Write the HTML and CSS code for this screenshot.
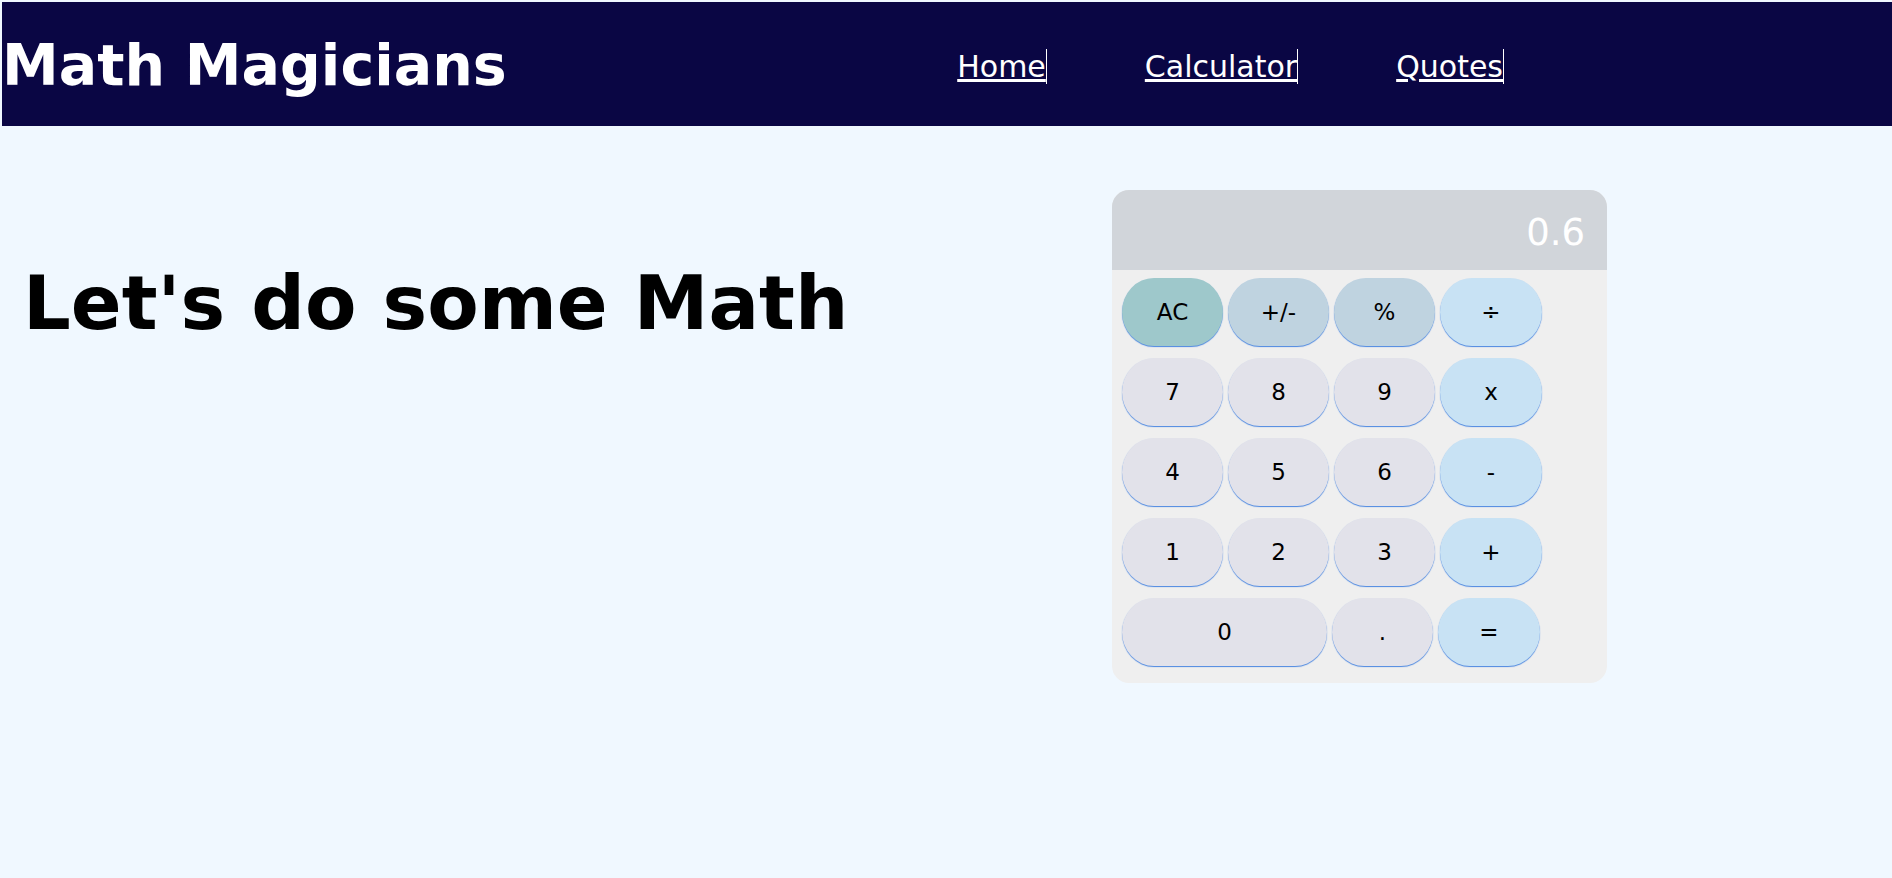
FILE: index.html
```html
<!DOCTYPE html>
<html lang="en">
<head>
<meta charset="utf-8">
<title>Math Magicians</title>
<link rel="stylesheet" href="styles.css">
</head>
<body>
<header class="header">
  <h1 class="brand">Math Magicians</h1>
  <nav class="nav">
    <ul class="nav-list">
      <li><a class="nav-link" href="#">Home</a></li>
      <li><a class="nav-link" href="#">Calculator</a></li>
      <li><a class="nav-link" href="#">Quotes</a></li>
    </ul>
  </nav>
</header>
<main class="main">
  <h2 class="headline">Let's do some Math</h2>
  <div class="calculator">
    <div class="display">0.6</div>
    <div class="keypad">
      <div class="row">
        <button class="key key-ac">AC</button>
        <button class="key key-fn">+/-</button>
        <button class="key key-fn">%</button>
        <button class="key key-op">÷</button>
      </div>
      <div class="row">
        <button class="key">7</button>
        <button class="key">8</button>
        <button class="key">9</button>
        <button class="key key-op">x</button>
      </div>
      <div class="row">
        <button class="key">4</button>
        <button class="key">5</button>
        <button class="key">6</button>
        <button class="key key-op">-</button>
      </div>
      <div class="row">
        <button class="key">1</button>
        <button class="key">2</button>
        <button class="key">3</button>
        <button class="key key-op">+</button>
      </div>
      <div class="row">
        <button class="key key-zero">0</button>
        <button class="key">.</button>
        <button class="key key-op">=</button>
      </div>
    </div>
  </div>
</main>
</body>
</html>
```

FILE: styles.css
```css
* {
  box-sizing: border-box;
}

html, body {
  margin: 0;
  padding: 0;
}

body {
  background: #f0f8ff;
  font-family: "DejaVu Sans", Verdana, sans-serif;
  color: #000;
}

.header {
  margin: 2px 0 0 2px;
  height: 124px;
  background: #0a0644;
  display: flex;
  align-items: center;
  justify-content: space-between;
}

.brand {
  margin: 0;
  color: #fff;
  font-size: 57px;
  font-weight: bold;
  line-height: 1;
  padding-top: 2px;
}

.nav {
  padding-right: 388px;
  padding-top: 4px;
}

.nav-list {
  list-style: none;
  margin: 0;
  padding: 0;
  display: flex;
  gap: 98px;
}

.nav-link {
  color: #fff;
  font-size: 30px;
  text-decoration: underline;
  border-right: 1px solid #fff;
}

.main {
  display: flex;
  justify-content: space-between;
  align-items: flex-start;
  padding: 64px 285px 0 23px;
}

.headline {
  margin: 70px 0 0 0;
  font-size: 75px;
  font-weight: bold;
  line-height: 87px;
}

.calculator {
  width: 495px;
  background: #efefef;
  border-radius: 17px;
  overflow: hidden;
}

.display {
  height: 80px;
  background: #d1d5da;
  color: #fff;
  font-size: 37px;
  display: flex;
  align-items: center;
  justify-content: flex-end;
  padding: 4px 22px 0 0;
}

.keypad {
  display: flex;
  flex-direction: column;
  gap: 12px;
  padding: 8px 10px 17px 10px;
}

.row {
  display: flex;
  gap: 5px;
}

.key {
  width: 101px;
  height: 68px;
  border: none;
  border-radius: 32px / 34px;
  background: #e2e2ea;
  box-shadow: 0 1px 1px #4a86e0;
  font-family: "DejaVu Sans", Verdana, sans-serif;
  font-size: 23px;
  color: #000;
  padding: 0;
}

.key-ac {
  background: #9ec8cb;
}

.key-fn {
  background: #bfd3e0;
}

.key-op {
  width: 102px;
  background: #c8e2f4;
}

.key-zero {
  width: 205px;
}
```
